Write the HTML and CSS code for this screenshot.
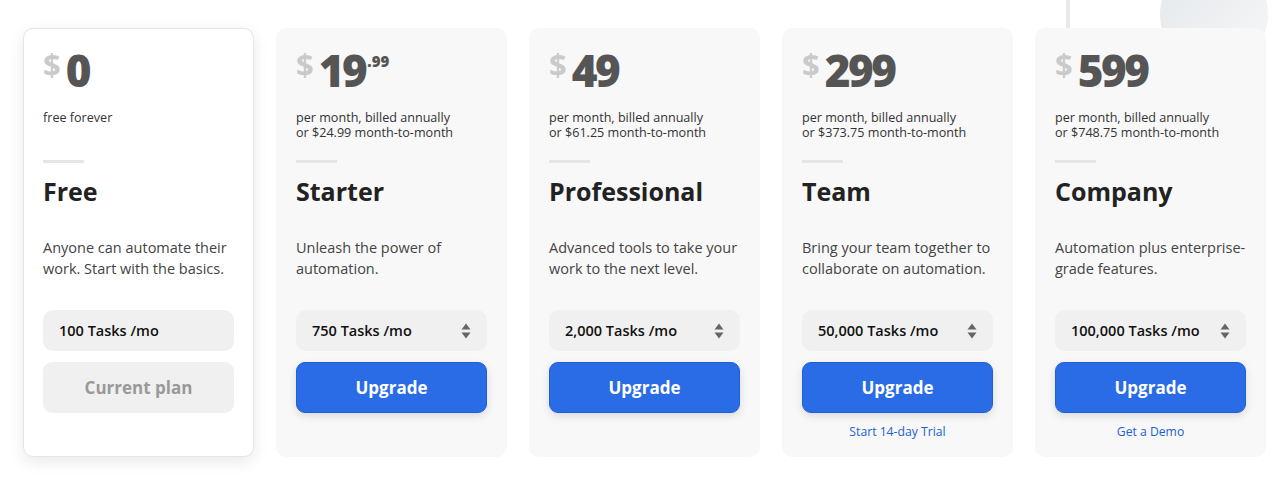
FILE: index.html
```html
<!DOCTYPE html>
<html lang="en">
<head>
<meta charset="utf-8">
<title>Pricing</title>
<link rel="stylesheet" href="styles.css">
</head>
<body>
<div class="page">
  <div class="deco-line"></div>
  <div class="deco-circle"></div>
  <div class="plans">
    <div class="card card-current">
      <div class="price"><span class="cur">$</span><span class="amt">0</span></div>
      <div class="billing">free forever</div>
      <div class="divider"></div>
      <h2 class="name">Free</h2>
      <p class="desc">Anyone can automate their work. Start with the basics.</p>
      <div class="tasks"><span>100 Tasks /mo</span></div>
      <div class="btn btn-current">Current plan</div>
    </div>
    <div class="card">
      <div class="price"><span class="cur">$</span><span class="amt">19</span><span class="cents">.99</span></div>
      <div class="billing">per month, billed annually<br>or $24.99 month-to-month</div>
      <div class="divider"></div>
      <h2 class="name">Starter</h2>
      <p class="desc">Unleash the power of automation.</p>
      <div class="tasks"><span>750 Tasks /mo</span><svg class="arrows" viewBox="0 0 10 16" width="10" height="16"><path d="M5 0.5 L9.5 6.5 H0.5 Z M5 15.5 L9.5 9.5 H0.5 Z"/></svg></div>
      <div class="btn btn-primary">Upgrade</div>
    </div>
    <div class="card">
      <div class="price"><span class="cur">$</span><span class="amt">49</span></div>
      <div class="billing">per month, billed annually<br>or $61.25 month-to-month</div>
      <div class="divider"></div>
      <h2 class="name">Professional</h2>
      <p class="desc">Advanced tools to take your work to the next level.</p>
      <div class="tasks"><span>2,000 Tasks /mo</span><svg class="arrows" viewBox="0 0 10 16" width="10" height="16"><path d="M5 0.5 L9.5 6.5 H0.5 Z M5 15.5 L9.5 9.5 H0.5 Z"/></svg></div>
      <div class="btn btn-primary">Upgrade</div>
    </div>
    <div class="card">
      <div class="price"><span class="cur">$</span><span class="amt">299</span></div>
      <div class="billing">per month, billed annually<br>or $373.75 month-to-month</div>
      <div class="divider"></div>
      <h2 class="name">Team</h2>
      <p class="desc">Bring your team together to collaborate on automation.</p>
      <div class="tasks"><span>50,000 Tasks /mo</span><svg class="arrows" viewBox="0 0 10 16" width="10" height="16"><path d="M5 0.5 L9.5 6.5 H0.5 Z M5 15.5 L9.5 9.5 H0.5 Z"/></svg></div>
      <div class="btn btn-primary">Upgrade</div>
      <a class="sublink" href="#">Start 14-day Trial</a>
    </div>
    <div class="card">
      <div class="price"><span class="cur">$</span><span class="amt">599</span></div>
      <div class="billing">per month, billed annually<br>or $748.75 month-to-month</div>
      <div class="divider"></div>
      <h2 class="name">Company</h2>
      <p class="desc">Automation plus enterprise-grade features.</p>
      <div class="tasks"><span>100,000 Tasks /mo</span><svg class="arrows" viewBox="0 0 10 16" width="10" height="16"><path d="M5 0.5 L9.5 6.5 H0.5 Z M5 15.5 L9.5 9.5 H0.5 Z"/></svg></div>
      <div class="btn btn-primary">Upgrade</div>
      <a class="sublink" href="#">Get a Demo</a>
    </div>
  </div>
</div>
</body>
</html>
```

FILE: styles.css
```css
* { box-sizing: border-box; }
html, body { margin: 0; padding: 0; background: #ffffff; }
body {
  font-family: "Open Sans", "Liberation Sans", Arial, sans-serif;
  color: #333;
  width: 1280px;
  height: 483px;
  overflow: hidden;
}
.page {
  position: relative;
  padding: 28px 0 0 23px;
}
.deco-line {
  position: absolute;
  left: 1066px;
  top: 0;
  width: 4px;
  height: 40px;
  background: #e9e9e9;
}
.deco-circle {
  position: absolute;
  left: 1160px;
  top: -40px;
  width: 108px;
  height: 108px;
  border-radius: 50%;
  background: linear-gradient(135deg, #e3e7eb 0%, #eef0f2 55%, #f6f7f8 100%);
}
.plans {
  position: relative;
  display: flex;
  gap: 22px;
}
.card {
  width: 231px;
  height: 429px;
  background: #f8f8f8;
  border-radius: 10px;
  padding: 20px 20px 0 20px;
  display: flex;
  flex-direction: column;
}
.card-current {
  background: #ffffff;
  border: 1px solid #e6e6e6;
  padding: 19px 19px 0 19px;
  box-shadow: 0 5px 16px rgba(0, 0, 0, 0.09);
}
.price {
  display: flex;
  align-items: flex-start;
  height: 44px;
}
.cur {
  font-size: 31px;
  font-weight: 700;
  color: #cacaca;
  line-height: 36px;
  margin-top: -2px;
  margin-right: 5px;
}
.amt {
  font-size: 44px;
  font-weight: 800;
  color: #555555;
  line-height: 44px;
  letter-spacing: -2.5px;
}
.cents {
  font-size: 15px;
  font-weight: 800;
  color: #555555;
  line-height: 20px;
  margin-top: 3px;
  margin-left: 2px;
}
.billing {
  margin-top: 18px;
  font-size: 12.6px;
  line-height: 15px;
  min-height: 30px;
  color: #333333;
}
.divider {
  margin-top: 20px;
  width: 41px;
  height: 3px;
  background: #e6e6e6;
}
.name {
  margin: 12px 0 0 0;
  font-size: 25px;
  line-height: 32px;
  font-weight: 700;
  color: #222222;
}
.desc {
  margin: 30px 0 0 0;
  font-size: 14.5px;
  line-height: 21px;
  color: #444444;
  min-height: 42px;
}
.tasks {
  margin-top: 31px;
  height: 41px;
  border-radius: 10px;
  background: #f0f0f0;
  display: flex;
  align-items: center;
  justify-content: space-between;
  padding: 0 16px 0 16px;
  font-size: 14.5px;
  font-weight: 600;
  color: #111111;
}
.arrows {
  fill: #666666;
}
.btn {
  margin-top: 11px;
  height: 51px;
  border-radius: 9px;
  display: flex;
  align-items: center;
  justify-content: center;
  font-size: 17px;
  font-weight: 700;
}
.btn-current {
  background: #f0f0f0;
  color: #999999;
}
.btn-primary {
  background: #2a6be6;
  border: 1px solid #1f5fd8;
  color: #ffffff;
  box-shadow: 0 3px 8px rgba(0, 0, 0, 0.12);
}
.sublink {
  margin-top: 11px;
  text-align: center;
  font-size: 12.2px;
  line-height: 16px;
  color: #1b5fd1;
  text-decoration: none;
}
```
